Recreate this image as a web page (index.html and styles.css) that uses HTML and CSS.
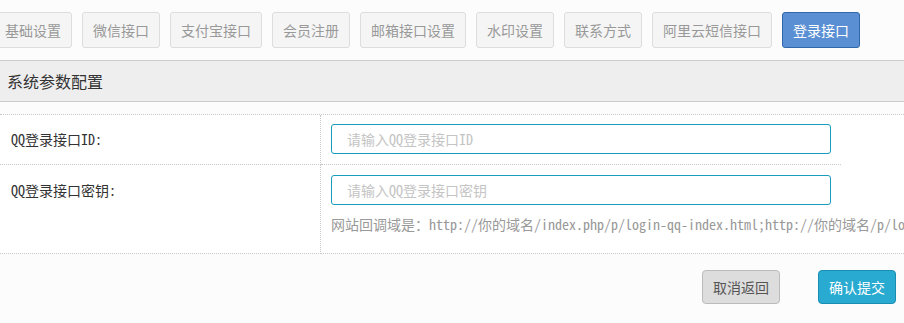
FILE: index.html
```html
<!DOCTYPE html>
<html lang="zh-CN">
<head>
    <meta charset="UTF-8">
    <title>登录接口</title>
    <link rel="stylesheet" href="styles.css">
</head>
<body>
    <!-- Tabs -->
    <div class="tabs">
        <a class="tab">基础设置</a>
        <a class="tab">微信接口</a>
        <a class="tab">支付宝接口</a>
        <a class="tab">会员注册</a>
        <a class="tab">邮箱接口设置</a>
        <a class="tab">水印设置</a>
        <a class="tab">联系方式</a>
        <a class="tab">阿里云短信接口</a>
        <a class="tab active">登录接口</a>
    </div>

    <div class="panel-head">系统参数配置</div>

    <!-- Form Table -->
    <div class="form-table">
        <div class="form-row">
            <div class="form-label">QQ登录接口ID:</div>
            <div class="form-field narrow">
                <input type="text" placeholder="请输入QQ登录接口ID">
            </div>
        </div>
        <div class="form-row">
            <div class="form-label second">QQ登录接口密钥:</div>
            <div class="form-field second">
                <input type="text" placeholder="请输入QQ登录接口密钥">
                <div class="help-text">网站回调域是：http://你的域名/index.php/p/login-qq-index.html;http://你的域名/p/login-qq-index.html</div>
            </div>
        </div>
    </div>

    <div class="actions">
        <button class="btn btn-cancel">取消返回</button>
        <button class="btn btn-submit">确认提交</button>
    </div>
</body>
</html>
```

FILE: styles.css
```css
/* General Styles */
* {
    margin: 0;
    padding: 0;
    box-sizing: border-box;
}

body {
    background-color: #fcfcfc;
    color: #333;
    font-family: "Noto Sans CJK SC", "Liberation Sans", sans-serif;
    overflow: hidden;
}

/* Tabs */
.tabs {
    display: flex;
    gap: 10px;
    padding-top: 12px;
    margin-left: -6px;
}

.tab {
    display: block;
    height: 36px;
    padding: 0 10px;
    line-height: 34px;
    font-size: 14px;
    color: #999;
    background: #f5f5f5;
    border: 1px solid #ddd;
    border-radius: 3px;
    white-space: nowrap;
}

.tab.active {
    color: #fff;
    background: #5b8fd3;
    border-color: #2f67ad;
}

/* Panel Head */
.panel-head {
    margin-top: 12px;
    height: 42px;
    line-height: 40px;
    padding-left: 7px;
    font-size: 16px;
    color: #333;
    background: #eee;
    border-top: 1px solid #ccc;
    border-bottom: 1px solid #ccc;
}

/* Form Table */
.form-table {
    margin-top: 12px;
    background: #fff;
    border-top: 1px dotted #c8c8c8;
    font-family: "Noto Sans Mono CJK SC", "Liberation Mono", "Noto Sans CJK SC", monospace;
    font-size: 14px;
    font-weight: 400;
}

.form-row {
    display: flex;
}

.form-label {
    flex: 0 0 321px;
    padding: 9px 0 0 11px;
    line-height: 30px;
    color: #333;
    border-right: 1px dotted #c8c8c8;
    border-bottom: 1px dotted #c8c8c8;
}

.form-field {
    flex: 1;
    min-width: 0;
    padding: 9px 0 10px 10px;
    border-bottom: 1px dotted #c8c8c8;
    overflow: hidden;
}

.form-label.second,
.form-field.second {
    padding-top: 10px;
}

.form-field.narrow {
    flex: 0 0 520px;
}

.form-field input {
    display: block;
    width: 500px;
    height: 30px;
    padding: 0 15px;
    border: 1px solid #1a9cbf;
    border-radius: 3px;
    font-family: inherit;
    font-size: 14px;
    outline: none;
}

.form-field input::placeholder {
    color: #c4c4c4;
}

.help-text {
    margin-top: 9px;
    padding-bottom: 9px;
    line-height: 20px;
    color: #999;
    white-space: nowrap;
}

/* Buttons */
.actions {
    display: flex;
    justify-content: flex-end;
    gap: 38px;
    padding: 16px 8px 0 0;
}

.btn {
    height: 34px;
    padding: 0 10px;
    font-family: "Noto Sans CJK SC", sans-serif;
    font-size: 14px;
    border: 1px solid;
    border-radius: 4px;
    cursor: pointer;
}

.btn-cancel {
    color: #555;
    background: #ddd;
    border-color: #bbb;
}

.btn-submit {
    color: #fff;
    background: #29aad0;
    border-color: #1a8db3;
}
```
